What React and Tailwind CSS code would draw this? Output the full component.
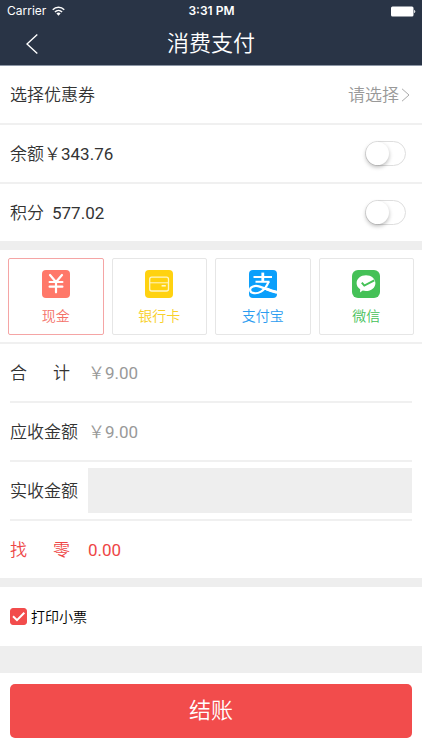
function WifiIcon() {
  return (
    <svg viewBox="0 0 26 20" className="h-[10px] w-[13px]" fill="none" stroke="#fff" strokeWidth="3" aria-hidden="true">
      <path d="M1.5 7.4a16.5 16.5 0 0 1 23 0" />
      <path d="M5.8 12a10.3 10.3 0 0 1 14.4 0" />
      <path d="M13 19.4l-4.2-4.6a6.2 6.2 0 0 1 8.4 0z" fill="#fff" stroke="none" />
    </svg>
  );
}

function BatteryIcon() {
  return (
    <svg viewBox="0 0 25 11" className="h-[11px] w-[25px]" fill="#fff" aria-hidden="true">
      <rect x="0" y="0.5" width="22.5" height="10" rx="1.5" />
      <path d="M23.2 3.8a1.9 1.9 0 0 1 0 3.4z" />
    </svg>
  );
}

function CashIcon() {
  return (
    <svg viewBox="0 0 28 28" className="size-7" fill="none" aria-hidden="true">
      <rect width="28" height="28" rx="4" fill="#ff7869" />
      <path d="M8 5l6 7 6-7M7.600 12h12.800M7.600 16.700h12.800M14 12v10.300" stroke="#fff" strokeWidth="2.200" strokeLinecap="round" />
    </svg>
  );
}

function CardIcon() {
  return (
    <svg viewBox="0 0 28 28" className="size-7" fill="none" aria-hidden="true">
      <rect width="28" height="28" rx="4" fill="#ffd210" />
      <rect x="4.7" y="7.2" width="18.8" height="13.8" rx="2" stroke="#fff6c8" strokeWidth="1.3" />
      <path d="M4.7 12.8h18.8" stroke="#fff6c8" strokeWidth="1" />
      <path d="M16.6 15.8h4.2" stroke="#fff6c8" strokeWidth="1.6" />
    </svg>
  );
}

function AlipayIcon() {
  return (
    <svg viewBox="0 0 28 28" className="size-7" aria-hidden="true">
      <rect width="28" height="28" rx="4" fill="#0b9ffb" />
      <g fill="none" stroke="#fff">
        <path d="M4.500 7h18.500M6.500 11.700h14" strokeWidth="1.9" />
        <path d="M13.800 2.600v9.500" strokeWidth="2.800" />
        <path d="M19.600 11.700c-1.600 4.600-4.300 7.900-7.600 9.900-4.300 2.600-10.600 2.200-10.900-1.600-.3-3.500 4.900-4.900 9.700-3.400 5.600 1.700 10.200 4.200 17.200 5.800" strokeWidth="2.200" />
        <path d="M17.500 18.800c3.600 1.600 6.500 2.600 10.500 3.500" strokeWidth="3" />
      </g>
    </svg>
  );
}

function WechatIcon() {
  return (
    <svg viewBox="0 0 28 28" className="size-7" aria-hidden="true">
      <rect width="28" height="28" rx="6" fill="#45c157" />
      <path d="M14 5.300c5.300 0 9.400 3.500 9.400 7.900s-4.100 7.900-9.400 7.900c-1.200 0-2.300-.2-3.300-.5l-2.700 1.900.2-3.200c-2.200-1.500-3.600-3.600-3.600-6.100 0-4.400 4.100-7.900 9.400-7.900z" fill="#fff" />
      <path d="M9.800 12.600l2.500 3 10-5.300" fill="none" stroke="#45c157" strokeWidth="2" />
    </svg>
  );
}

const methods = [
  { id: "cash", label: "现金", Icon: CashIcon, box: "border-[#f5a5a5] text-[#f47068]" },
  { id: "card", label: "银行卡", Icon: CardIcon, box: "border-[#e6e6e6] text-[#f8d02a]" },
  { id: "alipay", label: "支付宝", Icon: AlipayIcon, box: "border-[#e6e6e6] text-[#2b9cf0]" },
  { id: "wechat", label: "微信", Icon: WechatIcon, box: "border-[#e6e6e6] text-[#45bf58]" },
];

function Toggle({ id }) {
  return (
    <input
      id={id}
      type="checkbox"
      role="switch"
      className="h-[25px] w-[41px] shrink-0 appearance-none rounded-full border border-[#dedede] bg-white before:block before:size-[23px] before:rounded-full before:bg-white before:shadow-[0_2px_4px_rgba(0,0,0,0.28)] checked:bg-[#4cd964] checked:before:translate-x-4"
    />
  );
}

function RowLabel({ text }) {
  return (
    <span className="flex w-[68px] shrink-0">
      <span className="flex min-w-[60px] justify-between">
        {text.split(" ").map((part) => (
          <span key={part}>{part}</span>
        ))}
      </span>
    </span>
  );
}

export default function App() {
  return (
    <div className="flex min-h-screen flex-col bg-[#eeeeee] font-[Roboto,'Noto_Sans_CJK_SC',sans-serif] text-[17px] leading-6 font-[350] text-[#333]">
      <header className="border-b border-[#8d97a6] bg-[#293446] text-white">
        <div className="grid h-[22px] grid-cols-3 items-center pr-1.5 pl-[7px] font-[Inter,sans-serif] text-xs leading-4 font-normal">
          <span className="flex items-center gap-1.5">
            Carrier
            <WifiIcon />
          </span>
          <span className="text-center font-semibold">3:31 PM</span>
          <span className="flex justify-end">
            <BatteryIcon />
          </span>
        </div>
        <div className="grid h-[43px] grid-cols-[48px_1fr_48px] items-center">
          <button type="button" aria-label="返回" className="flex h-full items-center justify-end pr-2.5">
            <svg viewBox="0 0 12 20" className="h-5 w-3" fill="none" stroke="#fff" strokeWidth="1.4" aria-hidden="true">
              <path d="M11.300.6L1 10l10.300 9.400" />
            </svg>
          </button>
          <h1 className="text-center text-[22px] leading-8">消费支付</h1>
        </div>
      </header>

      <main>
        <section className="mb-[9px] bg-white">
          <button type="button" className="flex h-[59px] w-full items-center justify-between border-b-2 border-[#f0f0f0] pr-3 pl-2.5">
            <span>选择优惠券</span>
            <span className="flex items-center gap-0.5 text-[#999]">
              请选择
              <svg viewBox="0 0 9 14" className="h-3.5 w-[9px]" fill="none" stroke="#aaa" strokeWidth="1" aria-hidden="true">
                <path d="M1 .8L8 7l-7 6.200" />
              </svg>
            </span>
          </button>
          <div className="flex h-[59px] items-center justify-between border-b-2 border-[#f0f0f0] pr-4 pl-2.5">
            <label htmlFor="balance">余额￥<span className="font-normal">343.76</span></label>
            <Toggle id="balance" />
          </div>
          <div className="flex h-[57px] items-center justify-between pr-4 pl-2.5">
            <label htmlFor="points" className="flex gap-2">
              积分<span className="font-normal">577.02</span>
            </label>
            <Toggle id="points" />
          </div>
        </section>

        <section className="bg-white">
          <div className="grid grid-cols-4 gap-2 border-b-2 border-[#f0f0f0] p-2 pb-[7px]">
            {methods.map(({ id, label, Icon, box }) => (
              <button
                key={id}
                type="button"
                className={`flex h-[77px] flex-col items-center gap-2 rounded-xs border pt-[11px] text-sm leading-5 ${box}`}
              >
                <Icon />
                {label}
              </button>
            ))}
          </div>
          <div className="px-2.5">
            <div className="flex h-[59px] items-center gap-2.5 border-b-2 border-[#f0f0f0]">
              <RowLabel text="合 计" />
              <span className="text-[#999]">￥<span className="font-normal">9.00</span></span>
            </div>
            <div className="flex h-[59px] items-center gap-2.5 border-b-2 border-[#f0f0f0]">
              <RowLabel text="应收金额" />
              <span className="text-[#999]">￥<span className="font-normal">9.00</span></span>
            </div>
            <div className="flex h-[59px] items-center gap-2.5 border-b-2 border-[#f0f0f0]">
              <label htmlFor="received">
                <RowLabel text="实收金额" />
              </label>
              <input id="received" type="text" inputMode="decimal" className="h-[45px] min-w-0 flex-1 bg-[#eeeeee] px-2 outline-none" />
            </div>
            <div className="flex h-[57px] items-center gap-2.5 text-[#ee4545]">
              <RowLabel text="找 零" />
              <span className="font-normal">0.00</span>
            </div>
          </div>
        </section>

        <section className="mt-[9px] flex h-[59px] items-center gap-1 bg-white px-2.5">
          <span className="grid size-[17px]">
            <input
              id="receipt"
              type="checkbox"
              defaultChecked
              className="peer col-start-1 row-start-1 size-[17px] appearance-none rounded-[3px] border border-[#f24c4c] checked:bg-[#f24c4c]"
            />
            <svg viewBox="0 0 17 17" className="pointer-events-none col-start-1 row-start-1 size-[17px] opacity-0 peer-checked:opacity-100" fill="none" stroke="#fff" strokeWidth="2" aria-hidden="true">
              <path d="M3 8.200l4 4 7.300-7.400" />
            </svg>
          </span>
          <label htmlFor="receipt" className="text-sm leading-5 text-black">打印小票</label>
        </section>
      </main>

      <footer className="mt-[27px] flex-1 bg-white px-2.5 pt-[11px] pb-3">
        <button type="button" className="h-[54px] w-full rounded-[5px] bg-[#f24c4c] text-[22px] leading-8 text-white">
          结账
        </button>
      </footer>
    </div>
  );
}
